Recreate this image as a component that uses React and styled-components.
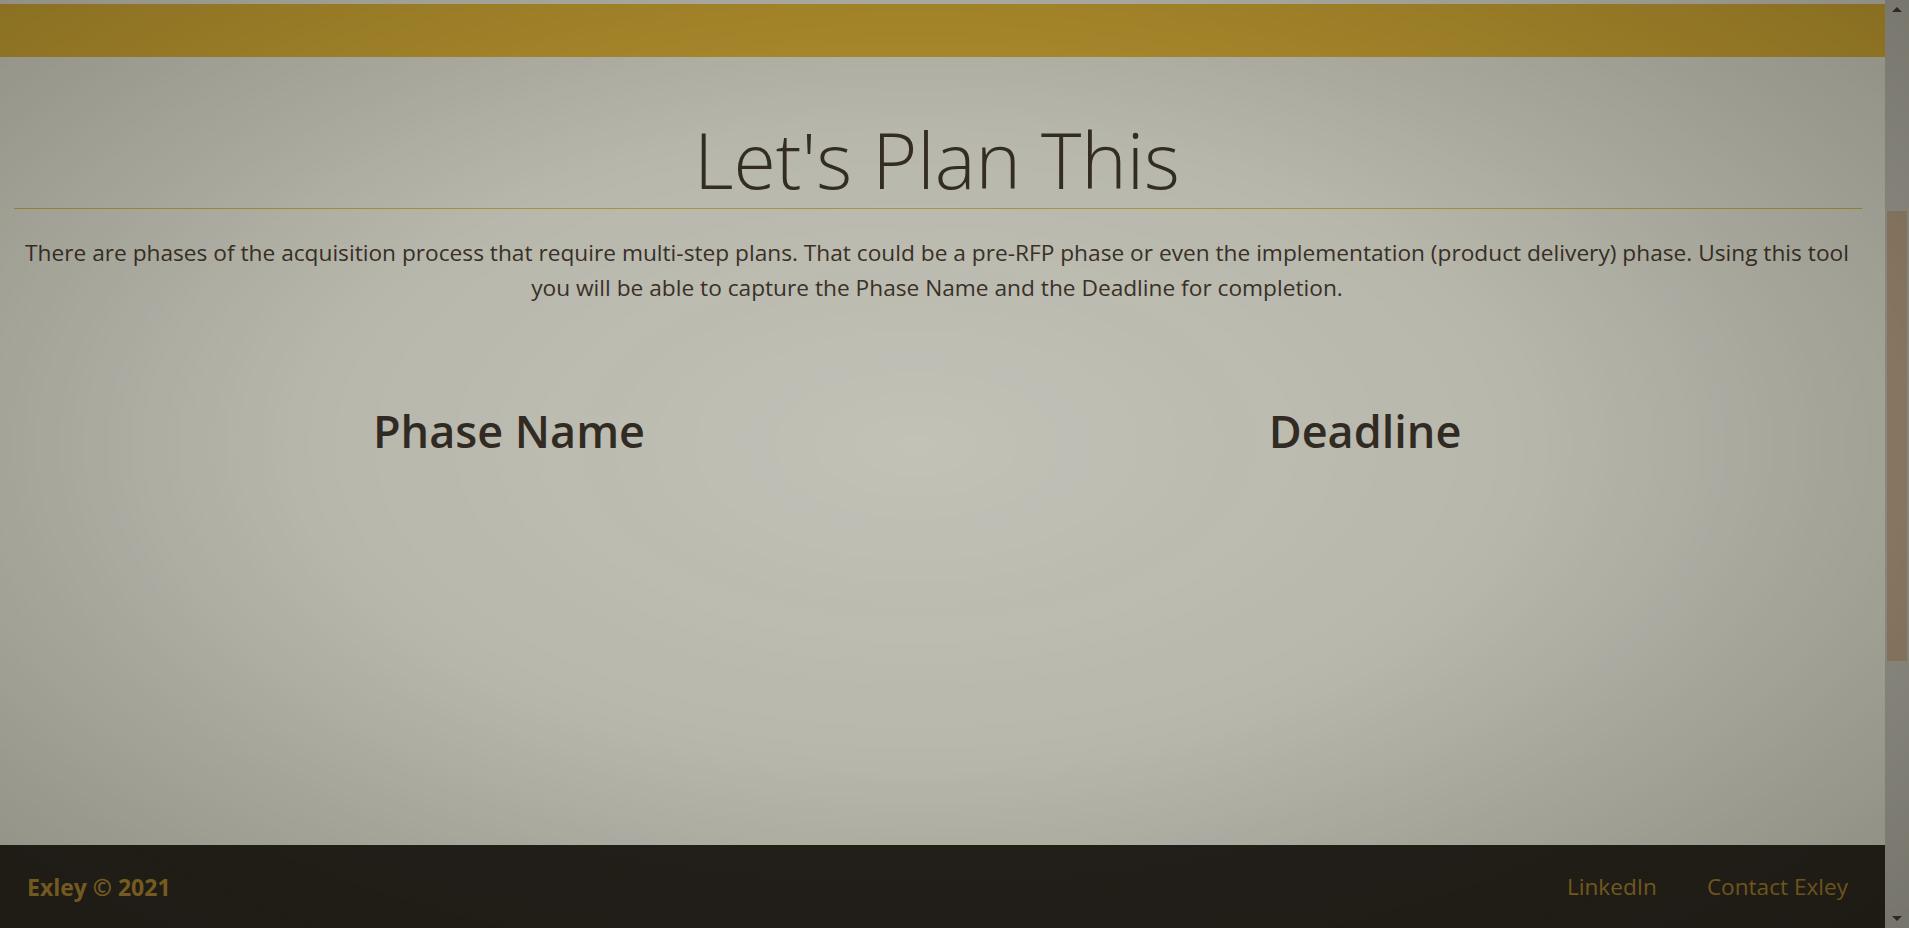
import React from "react";
import styled, { createGlobalStyle } from "styled-components";

const GlobalStyle = createGlobalStyle`
  html, body {
    margin: 0;
    padding: 0;
    height: 100%;
    overflow: hidden;
  }
  body {
    background-color: #c2c2b7;
    font-family: "Open Sans", "Noto Sans", sans-serif;
    color: #3a3129;
  }
`;

const columns = ["Phase Name", "Deadline"];

function App() {
  return (
    <>
      <GlobalStyle />
      <StShell>
        <StPage>
          <StTopBand />
          <StMain>
            <StTitle>Let's Plan This</StTitle>
            <StRule />
            <StIntro>
              There are phases of the acquisition process that require multi-step plans. That could be a
              pre-RFP phase or even the implementation (product delivery) phase. Using this tool you will be
              able to capture the Phase Name and the Deadline for completion.
            </StIntro>
            <StColumns>
              {columns.map((name) => (
                <StColumnHeading key={name}>{name}</StColumnHeading>
              ))}
            </StColumns>
          </StMain>
          <StFooter>
            <StBrand>Exley © 2021</StBrand>
            <StFooterLinks>
              <StFooterLink href="#">LinkedIn</StFooterLink>
              <StFooterLink href="#">Contact Exley</StFooterLink>
            </StFooterLinks>
          </StFooter>
        </StPage>
        <StScrollTrack>
          <StArrow $up />
          <StThumb />
          <StArrow />
        </StScrollTrack>
      </StShell>
      <StVignette />
    </>
  );
}

export default App;

const StShell = styled.div`
  display: flex;
  height: 100vh;
`;

const StPage = styled.div`
  flex: 1;
  display: flex;
  flex-direction: column;
  min-width: 0;
`;

const StTopBand = styled.div`
  height: 53px;
  margin-top: 4px;
  background-color: #b8952f;
`;

const StMain = styled.main`
  flex: 1;
  padding: 57px 11px 0 0;
`;

const StTitle = styled.h1`
  margin: 0;
  text-align: center;
  font-weight: 300;
  font-size: 77px;
  line-height: 91px;
  color: #352e27;
`;

const StRule = styled.hr`
  margin: 3px 12px 0 14px;
  border: none;
  border-top: 1px solid #b49a3c;
`;

const StIntro = styled.p`
  margin: 26px 14px 0;
  text-align: center;
  font-size: 22.7px;
  line-height: 35px;
  color: #3b3229;
`;

const StColumns = styled.div`
  width: 1712px;
  margin: 96px auto 0;
  display: grid;
  grid-template-columns: 1fr 1fr;
`;

const StColumnHeading = styled.h2`
  margin: 0;
  text-align: center;
  font-size: 45px;
  font-weight: 600;
  line-height: 60px;
  color: #332c25;
`;

const StFooter = styled.footer`
  height: 83px;
  background-color: #24211c;
  display: flex;
  align-items: center;
  justify-content: space-between;
  padding: 0 37px 0 27px;
  font-size: 22.6px;
`;

const StBrand = styled.span`
  font-weight: 700;
  font-size: 23px;
  color: #94742a;
`;

const StFooterLinks = styled.nav`
  display: flex;
  gap: 50px;
`;

const StFooterLink = styled.a`
  color: #8c6e26;
  text-decoration: none;
`;

const StScrollTrack = styled.div`
  width: 24px;
  background-color: #a3a299;
  display: flex;
  flex-direction: column;
  align-items: center;
  padding: 7px 0;
  box-sizing: border-box;
`;

const StArrow = styled.div`
  width: 0;
  height: 0;
  border-left: 5px solid transparent;
  border-right: 5px solid transparent;
  ${({ $up }) =>
    $up ? "border-bottom: 5px solid #3a352d;" : "border-top: 5px solid #3a352d; margin-top: auto;"}
`;

const StThumb = styled.div`
  width: 20px;
  height: 450px;
  margin-top: 199px;
  background-color: #a08d74;
`;

const StVignette = styled.div`
  position: fixed;
  inset: 0;
  pointer-events: none;
  background: radial-gradient(
    ellipse 70% 75% at 48% 48%,
    rgba(20, 15, 5, 0) 0%,
    rgba(20, 15, 5, 0.06) 45%,
    rgba(20, 15, 5, 0.3) 100%
  );
`;
